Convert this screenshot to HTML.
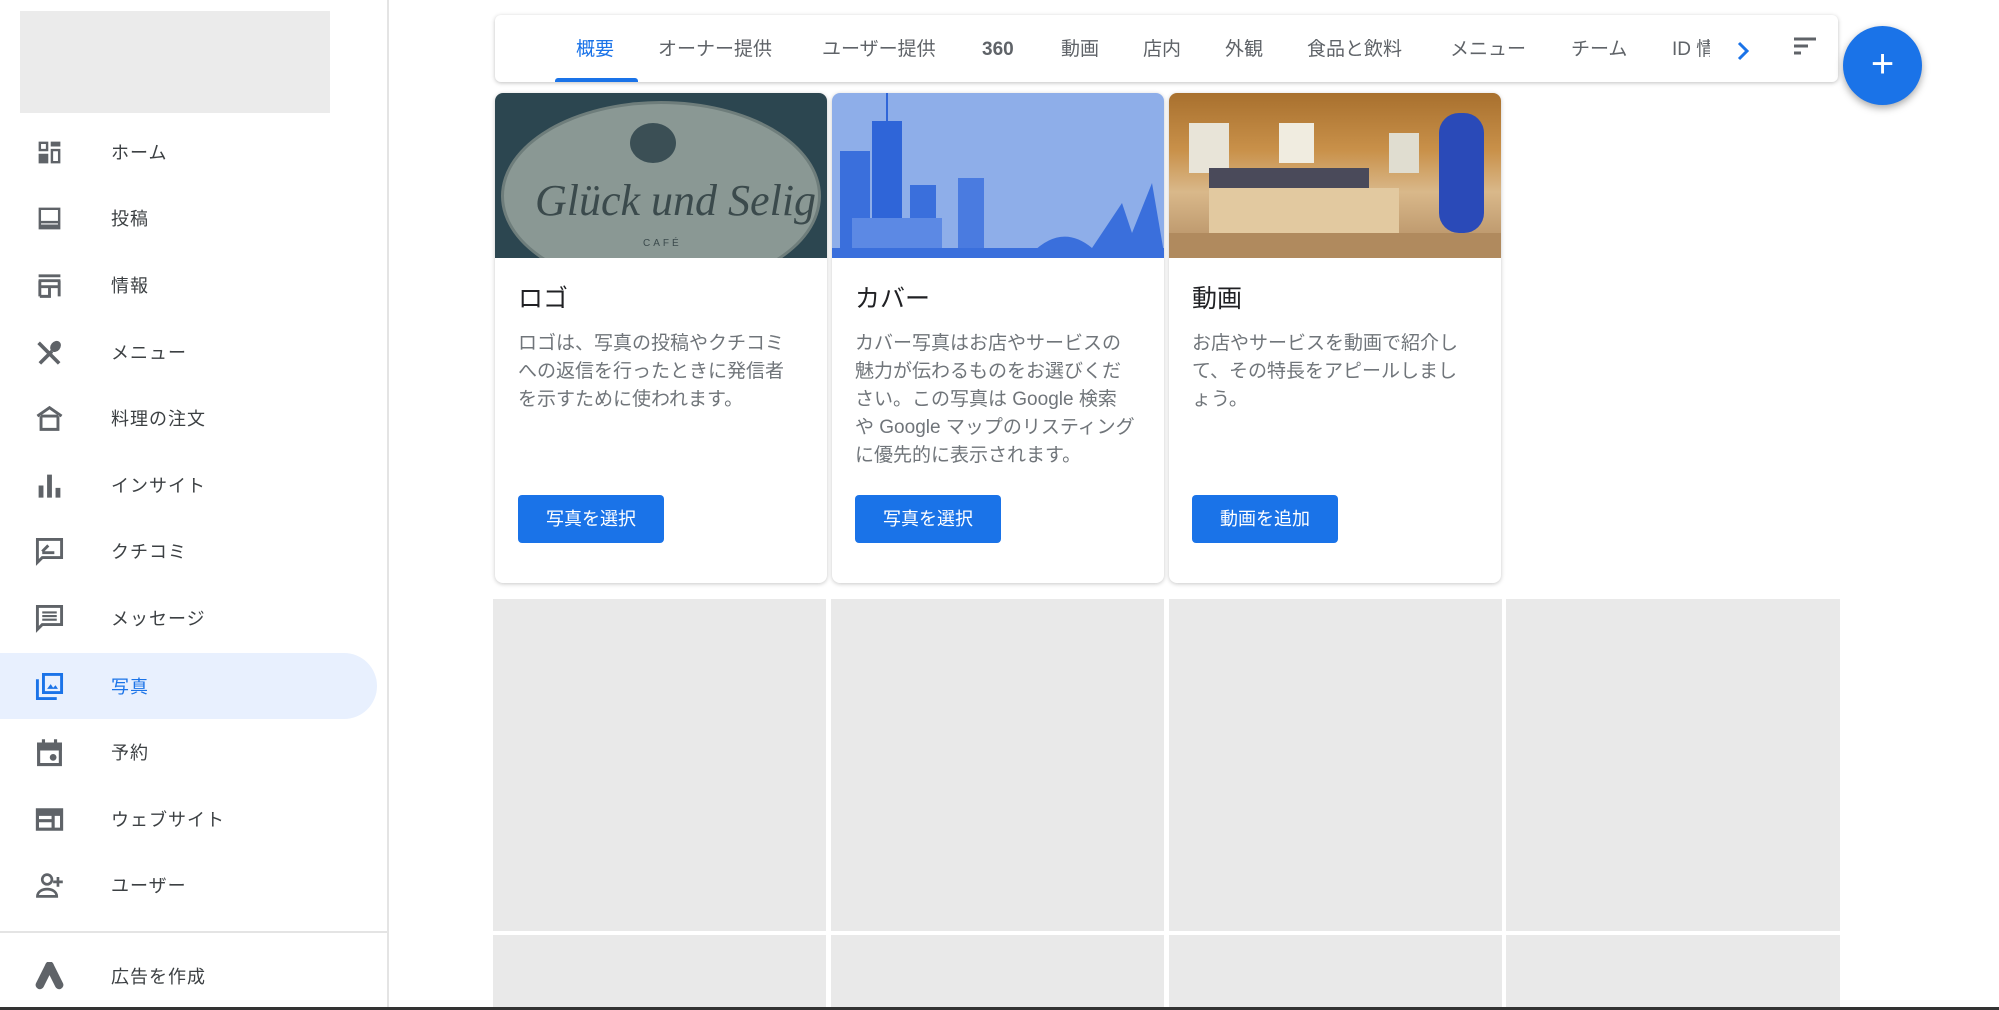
<!DOCTYPE html>
<html><head><meta charset="utf-8"><style>
*{margin:0;padding:0;box-sizing:border-box}
body{width:1999px;height:1010px;overflow:hidden;background:#fff;font-family:"Liberation Sans","Noto Sans CJK JP",sans-serif;position:relative;color:#3c4043}
.abs{position:absolute}
.side{left:0;top:0;width:389px;height:1010px;border-right:2px solid #e4e4e4}
.logo{left:20px;top:11px;width:310px;height:102px;background:#ebebeb}
.nav{position:absolute;left:0;width:377px;height:66px;display:flex;align-items:center}
.nav .ic{position:absolute;left:35px;top:19px;width:29px;height:29px}
.nav .t{position:absolute;left:111px;font-size:18px;color:#3c4043;letter-spacing:1px}
.sel{background:#e8f0fe;border-radius:0 33px 33px 0}
.sel .t{color:#1a73e8}
.tabs{left:495px;top:15px;width:1343px;height:67px;border-radius:6px;box-shadow:0 1px 4px rgba(0,0,0,.25);background:#fff}
.tab{position:absolute;top:22px;font-size:19px;line-height:26px;color:#5f6368;white-space:nowrap}
.card{position:absolute;top:93px;width:332px;height:490px;border-radius:8px;box-shadow:0 1px 4px rgba(0,0,0,.22);background:#fff;overflow:hidden}
.card .img{position:absolute;left:0;top:0;width:100%;height:165px;overflow:hidden}
.card h2{position:absolute;left:23px;top:186px;font-size:25px;font-weight:normal;color:#202124}
.card p{position:absolute;left:23px;top:237px;width:280px;font-size:19px;line-height:28px;color:#70757a}
.btn{position:absolute;left:23px;top:402px;width:146px;height:48px;background:#1a73e8;border-radius:4px;color:#fff;font-size:18px;text-align:center;line-height:48px}
.g{position:absolute;background:#e9e9e9}
</style></head><body>
<div class="abs side"></div>
<div class="abs logo"></div>

<div class="nav" style="top:119px"><svg class="ic" viewBox="0 0 24 24" fill="#5f6368"><path d="M3 3h8v8H3zM13 3h8v4h-8zM3 13h8v8H3zM13 9h8v12h-8z" /><path d="M5 5h4v4H5zM15 11h4v8h-4z" fill="#fff"/></svg><span class="t">ホーム</span></div>
<div class="nav" style="top:185px"><svg class="ic" viewBox="0 0 24 24" fill="#5f6368"><path d="M3 3h18v18H3z"/><path d="M5 5h14v9H5zM5 16h14v1H5z" fill="#fff"/></svg><span class="t">投稿</span></div>
<div class="nav" style="top:252px"><svg class="ic" viewBox="0 0 24 24" fill="none" stroke="#5f6368" stroke-width="2.4"><path d="M3 4h18M3 8h18M4 8v13M20 8v13M4 13h16M12 13v8H4"/></svg><span class="t">情報</span></div>
<div class="nav" style="top:319px"><svg class="ic" viewBox="0 0 24 24" fill="#5f6368"><path d="M3 4l17 17" stroke="#5f6368" stroke-width="3"/><path d="M4 21L14 11" stroke="#5f6368" stroke-width="3"/><ellipse cx="17" cy="7" rx="4" ry="5" transform="rotate(40 17 7)"/></svg><span class="t">メニュー</span></div>
<div class="nav" style="top:385px"><svg class="ic" viewBox="0 0 24 24" fill="none" stroke="#5f6368" stroke-width="2.4"><path d="M2 10L12 3l10 7M5 10v11h14V10M5 10h14"/></svg><span class="t">料理の注文</span></div>
<div class="nav" style="top:452px"><svg class="ic" viewBox="0 0 24 24" fill="#5f6368"><path d="M3 12h4v10H3zM10 3h4v19h-4zM17 14h4v8h-4z"/></svg><span class="t">インサイト</span></div>
<div class="nav" style="top:518px"><svg class="ic" viewBox="0 0 24 24" fill="none" stroke="#5f6368" stroke-width="2.4"><path d="M2 2h20v15H6l-4 4z"/><path d="M6 13h10M6 12l5-5" /></svg><span class="t">クチコミ</span></div>
<div class="nav" style="top:585px"><svg class="ic" viewBox="0 0 24 24" fill="none" stroke="#5f6368" stroke-width="2.4"><path d="M2 2h20v15H6l-4 4z"/><path d="M6 7h12M6 10h12M6 13h12" stroke-width="1.8"/></svg><span class="t">メッセージ</span></div>
<div class="nav sel" style="top:653px"><svg class="ic" viewBox="0 0 24 24" fill="none" stroke="#1a73e8" stroke-width="2.4"><path d="M7 2h15v15H7zM2 6v16h16"/><path d="M10 14l3-4 2 3 2-2 2 3z" fill="#1a73e8" stroke="none"/></svg><span class="t">写真</span></div>
<div class="nav" style="top:719px"><svg class="ic" viewBox="0 0 24 24" fill="none" stroke="#5f6368" stroke-width="2.6"><path d="M3 5h18v17H3zM7 1v4M17 1v4"/><path d="M3 5h18v4H3z" fill="#5f6368"/><circle cx="15" cy="16" r="1.5" fill="#5f6368"/></svg><span class="t">予約</span></div>
<div class="nav" style="top:786px"><svg class="ic" viewBox="0 0 24 24" fill="none" stroke="#5f6368" stroke-width="2.6"><path d="M2 4h20v16H2z"/><path d="M2 7h20" stroke-width="4"/><path d="M2 13h13M15 7v13"/></svg><span class="t">ウェブサイト</span></div>
<div class="nav" style="top:852px"><svg class="ic" viewBox="0 0 24 24" fill="none" stroke="#5f6368" stroke-width="2.2"><circle cx="10" cy="7" r="4"/><path d="M2 21c0-4 4-6 8-6s8 2 8 6z"/><path d="M19 5v8M15 9h8"/></svg><span class="t">ユーザー</span></div>
<div class="abs" style="left:0;top:931px;width:388px;height:2px;background:#e4e4e4"></div>
<div class="nav" style="top:943px"><svg class="ic" viewBox="0 0 24 24"><path d="M12 3L4 19" stroke="#5f6368" stroke-width="7" stroke-linecap="round"/><path d="M12 3l8 16" stroke="#5f6368" stroke-width="7" stroke-linecap="round"/></svg><span class="t">広告を作成</span></div>

<div class="abs tabs">
<span class="tab" style="left:81px;color:#1a73e8">概要</span>
<span class="tab" style="left:163px">オーナー提供</span>
<span class="tab" style="left:327px">ユーザー提供</span>
<span class="tab" style="left:487px;font-weight:bold">360</span>
<span class="tab" style="left:566px">動画</span>
<span class="tab" style="left:648px">店内</span>
<span class="tab" style="left:730px">外観</span>
<span class="tab" style="left:812px">食品と飲料</span>
<span class="tab" style="left:955px">メニュー</span>
<span class="tab" style="left:1076px">チーム</span>
<span class="tab" style="left:1177px;width:38px;overflow:hidden">ID 情報</span>
<svg class="abs" style="left:1240px;top:24px" width="16" height="24" viewBox="0 0 16 24"><path d="M4 4l8 8-8 8" fill="none" stroke="#1a73e8" stroke-width="3"/></svg>
<svg class="abs" style="left:1297px;top:21px" width="26" height="22" viewBox="0 0 26 22"><path d="M2 3h22M2 10h14M2 17h7" stroke="#5f6368" stroke-width="3"/></svg>
<div class="abs" style="left:60px;top:63px;width:83px;height:4px;background:#1a73e8;border-radius:3px 3px 0 0"></div>
</div>
<div class="abs" style="left:1843px;top:26px;width:79px;height:79px;border-radius:50%;background:#1a73e8;box-shadow:0 3px 8px rgba(0,0,0,.35);color:#fff;font-size:40px;text-align:center;line-height:76px">+</div>

<div class="card" style="left:495px"><div class="img" style="background:#2c4650">
<div class="abs" style="left:6px;top:8px;width:320px;height:190px;border-radius:50%;background:#8a9894;border:3px solid #6e7d7b"></div>
<div class="abs" style="top:30px;width:46px;height:40px;border-radius:50%;background:#3b4f55;left:135px"></div>
<div class="abs" style="left:40px;top:82px;font-family:'Liberation Serif',serif;font-style:italic;font-size:44px;color:#3b4a4c;white-space:nowrap">Glück und Selig</div>
<div class="abs" style="left:148px;top:145px;font-size:10px;letter-spacing:3px;color:#3b4a4c">CAFÉ</div>
</div><h2>ロゴ</h2><p>ロゴは、写真の投稿やクチコミへの返信を行ったときに発信者を示すために使われます。</p><div class="btn">写真を選択</div></div>

<div class="card" style="left:832px"><div class="img" style="background:#8eaee9">
<div class="abs" style="left:8px;top:58px;width:30px;height:105px;background:#3a6fdc"></div>
<div class="abs" style="left:40px;top:28px;width:30px;height:135px;background:#2f65d8"></div>
<div class="abs" style="left:54px;top:0;width:2px;height:30px;background:#2f65d8"></div>
<div class="abs" style="left:78px;top:92px;width:26px;height:70px;background:#3a6fdc"></div>
<div class="abs" style="left:126px;top:85px;width:26px;height:78px;background:#4a7be0"></div>
<div class="abs" style="left:20px;top:125px;width:90px;height:40px;background:#5c89e4"></div>
<div class="abs" style="left:0;top:155px;width:332px;height:10px;background:#3a6fdc"></div>
<svg class="abs" style="left:200px;top:80px" width="132" height="80"><path d="M0 80Q30 50 60 75L90 30 100 60 120 10 132 80z" fill="#3a6fdc"/></svg>
</div><h2>カバー</h2><p>カバー写真はお店やサービスの魅力が伝わるものをお選びください。この写真は Google 検索や Google マップのリスティングに優先的に表示されます。</p><div class="btn">写真を選択</div></div>

<div class="card" style="left:1169px"><div class="img" style="background:linear-gradient(180deg,#a8702e 0%,#c9914a 35%,#d9b88a 60%,#b08a60 100%)">
<div class="abs" style="left:20px;top:30px;width:40px;height:50px;background:#e8e4d8"></div>
<div class="abs" style="left:110px;top:30px;width:35px;height:40px;background:#f0ece0"></div>
<div class="abs" style="left:220px;top:40px;width:30px;height:40px;background:#e0ddd0"></div>
<div class="abs" style="left:40px;top:75px;width:160px;height:20px;background:#4a4a5a"></div>
<div class="abs" style="left:40px;top:95px;width:190px;height:50px;background:#e2c9a0"></div>
<div class="abs" style="left:0;top:140px;width:332px;height:25px;background:#b08a5e"></div>
<div class="abs" style="left:270px;top:20px;width:45px;height:120px;border-radius:20px;background:#2a4ab8"></div>
</div><h2>動画</h2><p>お店やサービスを動画で紹介して、その特長をアピールしましょう。</p><div class="btn">動画を追加</div></div>

<div class="g" style="left:493px;top:599px;width:333px;height:332px"></div>
<div class="g" style="left:831px;top:599px;width:333px;height:332px"></div>
<div class="g" style="left:1169px;top:599px;width:333px;height:332px"></div>
<div class="g" style="left:1506px;top:599px;width:334px;height:332px"></div>
<div class="g" style="left:493px;top:935px;width:333px;height:75px"></div>
<div class="g" style="left:831px;top:935px;width:333px;height:75px"></div>
<div class="g" style="left:1169px;top:935px;width:333px;height:75px"></div>
<div class="g" style="left:1506px;top:935px;width:334px;height:75px"></div>
<div class="abs" style="left:0;top:1007px;width:1999px;height:3px;background:#333"></div>
</body></html>
